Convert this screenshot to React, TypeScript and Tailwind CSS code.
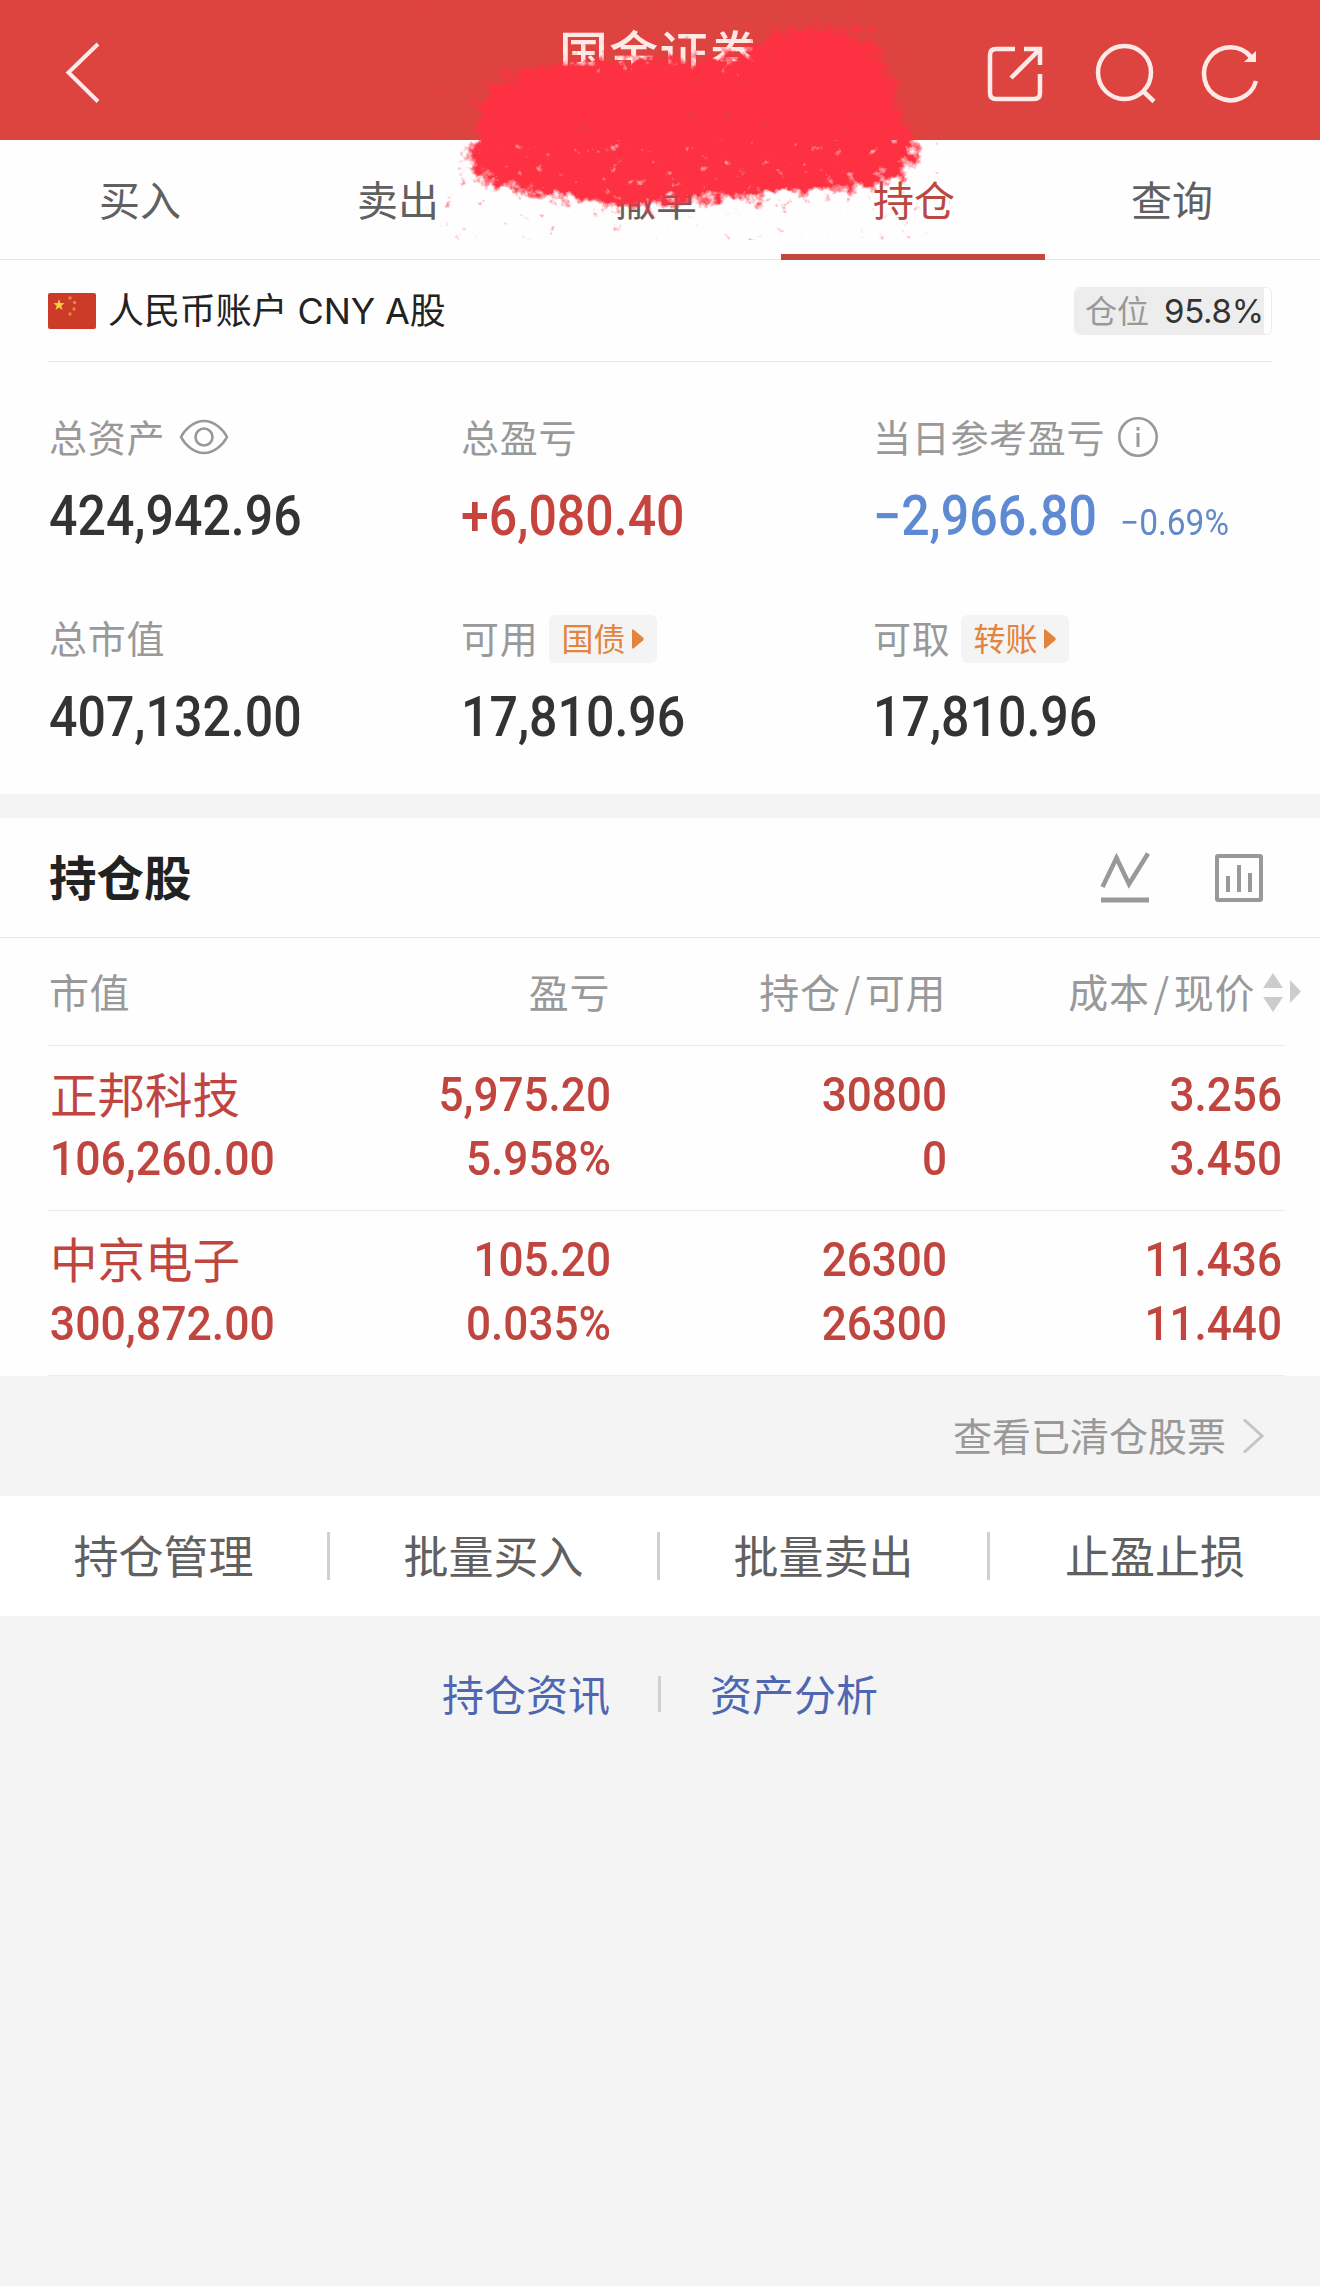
import * as React from "react";
import { clsx } from "clsx";

const tabs = ["买入", "卖出", "撤单", "持仓", "查询"];

const holdings = [
  { name: "正邦科技", value: "106,260.00", profit: "5,975.20", rate: "5.958%", amount: "30800", usable: "0", cost: "3.256", price: "3.450" },
  { name: "中京电子", value: "300,872.00", profit: "105.20", rate: "0.035%", amount: "26300", usable: "26300", cost: "11.436", price: "11.440" },
];

const actions = ["持仓管理", "批量买入", "批量卖出", "止盈止损"];

function Num({ children, className }: { children: React.ReactNode; className?: string }) {
  return (
    <span className={clsx("block whitespace-nowrap font-['Roboto','Noto_Sans_CJK_SC',sans-serif]", className)}>
      {children}
    </span>
  );
}

function Tag({ children }: { children: React.ReactNode }) {
  return (
    <span className="mt-[3px] ml-[11px] flex h-12 w-[108px] shrink-0 items-center rounded-md bg-[#f4f4f4] pl-[12px] text-[32px] tracking-normal text-[#e3833c]">
      <span className="-mt-[3px]">{children}</span>
      <svg width="12" height="20" viewBox="0 0 12 20" className="ml-[7px]">
        <path d="M0 1.5Q0 -.5 2 1L11 8.500Q12.500 10 11 11.500L2 19Q0 20.500 0 18.500Z" fill="#e3833c" />
      </svg>
    </span>
  );
}

function Stat({ label, value, className, extra, note }: { label: string; value: string; className?: string; extra?: React.ReactNode; note?: string }) {
  return (
    <div className="w-[412px] shrink-0">
      <div className="flex h-12 items-center whitespace-nowrap text-[38px] leading-[48px] tracking-[0.7px] text-[#999]">
        <span className="-mt-px">{label}</span>
        {extra}
      </div>
      <div className="mt-[28px] flex h-14 items-center">
        <Num className={clsx("origin-left scale-x-[0.91] text-[55px] leading-[56px] font-medium", className)}>{value}</Num>
        {note && <Num className="mt-[13px] ml-px origin-left scale-x-[0.93] text-[36px] leading-9 font-normal text-[#6289c8]">{note}</Num>}
      </div>
    </div>
  );
}

function Cell({ top, bottom, className }: { top: string; bottom: string; className: string }) {
  return (
    <div className={clsx("pt-px text-right text-[49px] leading-[64px] font-medium", className)}>
      <Num className="origin-right scale-x-[0.9]">{top}</Num>
      <Num className="origin-right scale-x-[0.9]">{bottom}</Num>
    </div>
  );
}

// Rough brush stroke, the edge is broken up by noise
function Scribble() {
  return (
    <svg width="520" height="240" viewBox="430 0 520 240" className="pointer-events-none absolute top-0 left-[430px]">
      <defs>
        <filter id="brush" x="430" y="0" width="520" height="240" filterUnits="userSpaceOnUse" colorInterpolationFilters="sRGB">
          <feTurbulence type="fractalNoise" baseFrequency="0.09" numOctaves="6" seed="7" />
          <feColorMatrix values="0 0 0 0 0  0 0 0 0 0  0 0 0 0 0  1 0 0 0 0" result="noise" />
          <feGaussianBlur in="SourceAlpha" stdDeviation="8" result="soft" />
          <feComposite in="soft" in2="noise" operator="arithmetic" k1="0" k2="2.200" k3="3" k4="-2.150" result="mask" />
          <feFlood floodColor="#fd3142" />
          <feComposite in2="mask" operator="in" />
        </filter>
      </defs>
      <path
        filter="url(#brush)"
        d="M500 78L550 64L600 60L650 57L700 60L742 57L765 34L800 27L860 32L880 48L893 80L897 105L914 135L916 158L900 180L860 187L800 193L740 198L690 202L650 205L610 207L570 198L520 192L482 183L465 158L480 130L478 100Z"
      />
    </svg>
  );
}

export default function App() {
  return (
    <div className="relative min-h-[2286px] w-[1320px] overflow-hidden bg-[#f4f4f4] font-['Noto_Sans_CJK_SC',sans-serif] text-[#333]">
      {/* Header */}
      <header className="flex h-[140px] items-start justify-between bg-[#dd443f] text-[#ffe9e7]">
        <svg width="400" height="140" fill="none" stroke="currentColor" strokeWidth="4">
          <path d="M98 44L68.500 72.500L98 101.500" />
        </svg>
        <h1 className="mt-[23px] w-[202px] text-[49px] leading-[56px] font-medium tracking-[1.3px] whitespace-nowrap">国金证券</h1>
        <svg width="400" height="140" viewBox="920 0 400 140" fill="none" stroke="currentColor" strokeWidth="4.500">
          <path d="M1015 49H996Q990 49 990 55V93Q990 99 996 99H1034Q1040 99 1040 93V74M1024 49H1040V65M1038 51L1011 78" />
          <path d="M1031 47H1042V58Z" fill="currentColor" stroke="none" />
          <circle cx="1124.500" cy="72.500" r="26.500" />
          <path d="M1143 91L1154 101.500" />
          <path d="M1256 81A26.500 26.500 0 1 1 1251 57" />
          <path d="M1256 51V62H1244Z" fill="currentColor" stroke="none" />
        </svg>
      </header>

      {/* Tabs */}
      <nav className="flex h-[120px] border-b border-[#e6e6e6] bg-[#fefefe] pr-[19px] pl-[11px] text-[41px]">
        {tabs.map((tab) => (
          <div
            key={tab}
            className={clsx("relative flex flex-1 justify-center pt-[28px] leading-[60px]", tab === "持仓" ? "text-[#bb4741]" : "text-[#606060]")}
          >
            {tab}
            {tab === "持仓" && <span className="absolute -bottom-px -left-[4px] h-1.5 w-[264px] bg-[#c3463f]" />}
          </div>
        ))}
      </nav>

      {/* Account summary */}
      <section className="h-[534px] bg-[#fefefe] px-12">
        <div className="flex h-[102px] items-center border-b border-[#e8e8e8]">
          <svg width="48" height="36" viewBox="0 0 48 36">
            <rect width="48" height="36" rx="2" fill="#cc3a28" />
            <path d="M11 6L12.400 10.100L16.700 10.200L13.300 12.800L14.500 17L11 14.500L7.500 17L8.700 12.800L5.300 10.200L9.600 10.100Z" fill="#f7cf45" />
            <g fill="#e58a3a">
              <circle cx="22" cy="5" r="1.700" />
              <circle cx="26.500" cy="9.500" r="1.700" />
              <circle cx="26" cy="16" r="1.700" />
              <circle cx="22" cy="21" r="1.700" />
            </g>
          </svg>
          <span className="ml-3 font-['Inter','Noto_Sans_CJK_SC',sans-serif] text-[36px] leading-[50px] tracking-[-0.1px] text-[#222]">人民币账户 CNY A股</span>
          <div className="ml-auto h-12 w-[198px] rounded-md border border-[#ececec] bg-white">
            <div className="flex h-full w-[189px] items-center rounded-l-md bg-[#ededed] pl-[10px] text-[32px] leading-[46px] whitespace-nowrap text-[#999]">
              <span className="-mt-[3px]">仓位</span>
              <span className="ml-[15px] font-['Inter','Noto_Sans_CJK_SC',sans-serif] text-[33px] tracking-[-0.3px] text-[#333]">95.8%</span>
            </div>
          </div>
        </div>

        <div className="pt-[50px] pl-px">
          <div className="flex">
            <Stat
              label="总资产"
              value="424,942.96"
              extra={
                <svg width="50" height="36" viewBox="0 0 50 36" fill="none" stroke="#999" strokeWidth="2.600" className="mt-px ml-[14px]">
                  <path d="M2 18C6 10 15 2 25 2S44 10 48 18C44 26 35 34 25 34S6 26 2 18Z" />
                  <circle cx="25" cy="18" r="8.500" />
                </svg>
              }
            />
            <Stat label="总盈亏" value="+6,080.40" className="text-[#c5443d]" />
            <Stat
              label="当日参考盈亏"
              value="−2,966.80"
              note="−0.69%"
              className="text-[#5d8ad2]"
              extra={
                <svg width="42" height="42" viewBox="0 0 42 42" fill="none" stroke="#999" strokeWidth="2.600" className="mt-[2px] ml-[12px]">
                  <circle cx="21" cy="21" r="18.700" />
                  <path d="M21 17V31M21 11V14.500" strokeWidth="3" />
                </svg>
              }
            />
          </div>
          <div className="mt-[69px] flex">
            <Stat label="总市值" value="407,132.00" />
            <Stat label="可用" value="17,810.96" extra={<Tag>国债</Tag>} />
            <Stat label="可取" value="17,810.96" extra={<Tag>转账</Tag>} />
          </div>
        </div>
      </section>

      {/* Holdings */}
      <section className="mt-6 h-[558px] bg-[#fefefe]">
        <div className="flex h-[120px] items-center border-b border-[#e8e8e8] pr-[56px] pl-[49px]">
          <h2 className="-mt-[3px] text-[47.5px] font-bold text-[#222]">持仓股</h2>
          <svg width="50" height="52" viewBox="0 0 50 52" fill="none" stroke="#999" strokeWidth="4.500" className="ml-auto">
            <path d="M2.500 35L16.500 6L29 32L48 1.500" />
            <path d="M1 48H49" strokeWidth="5" />
          </svg>
          <svg width="50" height="50" viewBox="0 0 50 50" fill="none" stroke="#999" strokeWidth="4" className="ml-[64px]">
            <rect x="3" y="3" width="44" height="44" rx="1" />
            <path d="M14 23V39M25 12V39M36 20V39" />
          </svg>
        </div>

        <div className="ml-12 flex h-[108px] w-[1272px] items-center text-[40px] tracking-[0.6px] whitespace-nowrap text-[#999]">
          <span className="-mt-[3px] w-[225px] shrink-0 pl-px">市值</span>
          <span className="-mt-[3px] w-[337px] shrink-0 text-right">盈亏</span>
          <span className="-mt-[3px] flex w-[336px] shrink-0 justify-end">持仓<i className="px-[4px] not-italic">/</i>可用</span>
          <span className="-mt-[3px] flex w-[309px] shrink-0 justify-end">成本<i className="px-[4px] not-italic">/</i>现价</span>
          <svg width="40" height="40" viewBox="0 0 40 40" fill="#ccc" className="mt-[2px] ml-[7px] shrink-0">
            <path d="M1 15L11 0L21 15ZM1 24H21L11 39ZM28 7L39 18.500L28 30Z" />
          </svg>
        </div>

        {holdings.map((item) => (
          <div key={item.name} className="-mt-px ml-12 flex h-[166px] w-[1237px] border-t border-[#ececec] pt-4">
            <div className="w-[225px] whitespace-nowrap text-[#c0453e]">
              <div className="-mt-px h-[66px] pl-[2px] text-[47.5px] leading-[64px]">{item.name}</div>
              <Num className="origin-left scale-x-[0.91] pl-[2px] text-[49px] leading-[64px] font-medium">{item.value}</Num>
            </div>
            <Cell top={item.profit} bottom={item.rate} className="w-[338px] text-[#c0453e]" />
            <Cell top={item.amount} bottom={item.usable} className="w-[336px] text-[#c0453e]" />
            <Cell top={item.cost} bottom={item.price} className="w-[335px] text-[#c0453e]" />
          </div>
        ))}
        <div className="-mt-px ml-12 h-px w-[1237px] bg-[#ececec]" />
      </section>

      <div className="flex h-[120px] items-center justify-end pr-[56px] text-[39px] text-[#999]">
        <span className="-mt-[3px]">查看已清仓股票</span>
        <svg width="22" height="36" viewBox="0 0 22 36" fill="none" stroke="#c4c4c4" strokeWidth="3" className="ml-4">
          <path d="M2 1.500L20 18L2 34.500" />
        </svg>
      </div>

      {/* Actions */}
      <div className="flex h-[120px] items-center bg-white text-[45px] text-[#606060]">
        {actions.map((action, i) => (
          <div key={action} className={clsx("flex h-12 w-[330px] items-center justify-center", i < 3 && "border-r-[3px] border-[#d0d0d0]")}>
            <span className="-mt-[2px]">{action}</span>
          </div>
        ))}
      </div>

      <div className="mt-[58px] flex items-center justify-center text-[42px] leading-10 text-[#4f66b0]">
        <span className="-mt-px">持仓资讯</span>
        <span className="mr-[49px] ml-[48px] h-9 w-[3px] bg-[#d0d0d0]" />
        <span className="-mt-px">资产分析</span>
      </div>

      <Scribble />
    </div>
  );
}
